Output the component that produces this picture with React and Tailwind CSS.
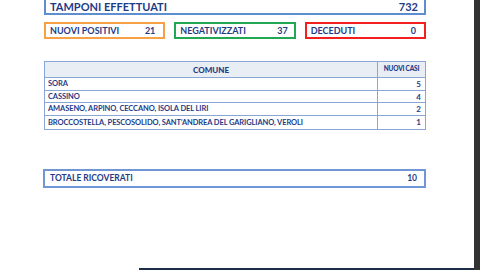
export default function App() {
  const rows = [
    ["SORA", "5"],
    ["CASSINO", "4"],
    ["AMASENO, ARPINO, CECCANO, ISOLA DEL LIRI", "2"],
    ["BROCCOSTELLA, PESCOSOLIDO, SANT\u2019ANDREA DEL GARIGLIANO, VEROLI", "1"],
  ];
  const font = { fontFamily: "Lato, 'Open Sans', sans-serif" };
  return (
    <div className="w-[480px] h-[270px] bg-white flex overflow-hidden" style={font}>
      <div className="w-[474px] h-full flex flex-col relative">
        <div className="flex flex-col w-[382px] ml-[44px] text-[#1f3b86] font-bold">
          <div className="-mt-[6px] h-[21px] border-2 border-[#5f8ed0] flex items-center justify-between px-[4px] text-[11px] leading-none">
            <span className="pt-[4px]">TAMPONI EFFETTUATI</span>
            <span className="pt-[4px] pr-[2px]">732</span>
          </div>
          <div className="mt-[7px] flex gap-[9px] h-[17px]">
            <div className="flex-1 border-2 border-[#f6a145] flex items-center justify-between px-[4px] text-[9px] leading-none">
              <span>NUOVI POSITIVI</span>
              <span className="pr-[4px]">21</span>
            </div>
            <div className="flex-1 border-2 border-[#22a852] flex items-center justify-between px-[4px] text-[9px] leading-none">
              <span>NEGATIVIZZATI</span>
              <span className="pr-[2px]">37</span>
            </div>
            <div className="flex-1 border-2 border-[#f41f1f] flex items-center justify-between px-[4px] text-[9px] leading-none">
              <span>DECEDUTI</span>
              <span className="pr-[4px]">0</span>
            </div>
          </div>
          <div className="mt-[22px] border border-[#8aa6d6] flex flex-col">
            <div className="h-[16px] flex bg-[#e9edf4] border-b border-[#8aa6d6]">
              <div className="flex-1 flex items-center justify-center text-[8px] leading-none border-r border-[#8aa6d6] font-black">COMUNE</div>
              <div className="w-[47px] flex items-center justify-center text-[6.5px] leading-none tracking-[-0.2px] font-black">NUOVI CASI</div>
            </div>
            {rows.map((r, i) => (
              <div key={i} className={"h-[12.7px] flex " + (i < rows.length - 1 ? "border-b border-[#8aa6d6]" : "")}>
                <div className="flex-1 flex items-center px-[3px] text-[7.5px] leading-none border-r border-[#8aa6d6] whitespace-nowrap tracking-[-0.1px]">{r[0]}</div>
                <div className="w-[47px] flex items-center justify-end pr-[4px] text-[8px] leading-none">{r[1]}</div>
              </div>
            ))}
          </div>
          <div className="mt-[39px] -ml-[1px] h-[19px] border-2 border-[#6f96d5] flex items-center justify-between px-[5px] text-[8.5px] leading-none">
            <span>TOTALE RICOVERATI</span>
            <span className="pr-[2px]">10</span>
          </div>
        </div>
        <div className="mt-auto ml-[139px] h-[2px] bg-[#1c2f44]" />
      </div>
      <div className="w-[6px] h-full bg-[#333333]" />
    </div>
  );
}
